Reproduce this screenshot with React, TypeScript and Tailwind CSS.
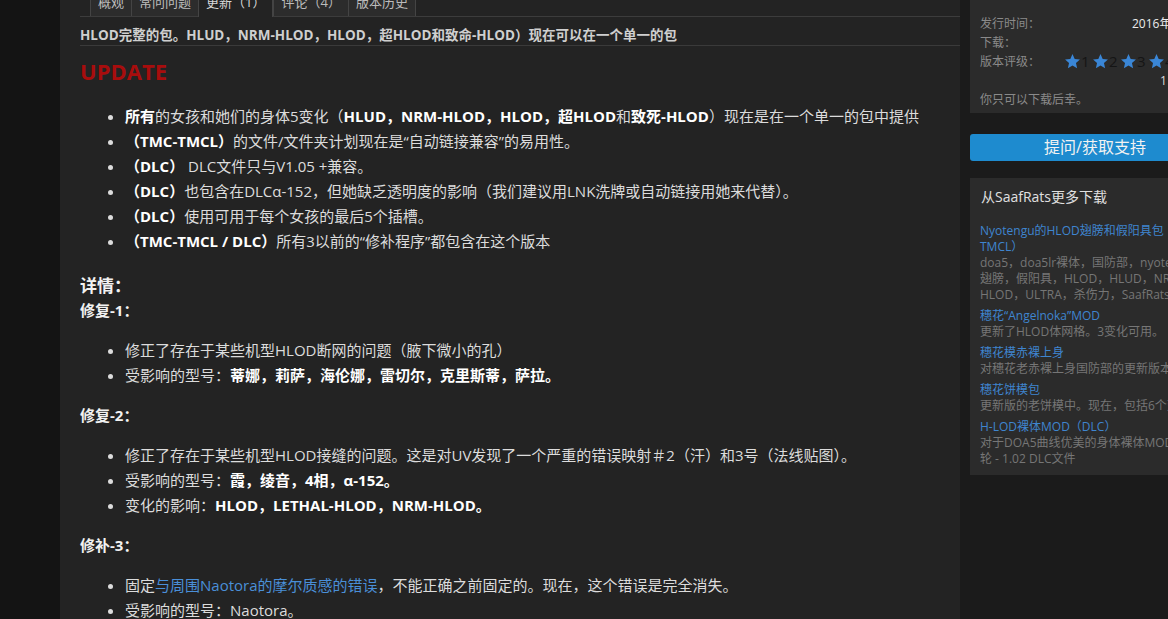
import type { ReactNode } from "react";

const tabs = [
  { label: "概观", active: false },
  { label: "常问问题", active: false },
  { label: "更新（1）", active: true },
  { label: "评论（4）", active: false },
  { label: "版本历史", active: false },
];

const moreDownloads = [
  {
    title: ["Nyotengu的HLOD翅膀和假阳具包（HLUD /", "TMCL）"],
    desc: ["doa5，doa5lr裸体，国防部，nyotengu，", "翅膀，假阳具，HLOD，HLUD，NRM-", "HLOD，ULTRA，杀伤力，SaafRats"],
  },
  { title: ["穗花“Angelnoka”MOD"], desc: ["更新了HLOD体网格。3变化可用。"] },
  { title: ["穗花模赤裸上身"], desc: ["对穗花老赤裸上身国防部的更新版本"] },
  { title: ["穗花饼模包"], desc: ["更新版的老饼模中。现在，包括6个变化"] },
  { title: ["H-LOD裸体MOD（DLC）"], desc: ["对于DOA5曲线优美的身体裸体MOD第", "轮 - 1.02 DLC文件"] },
];

export default function App() {
  return (
    <div className="flex h-[619px] w-[1168px] overflow-hidden bg-[#141414] font-['Open_Sans','Noto_Sans_CJK_SC',sans-serif] text-[#dcdcdc]">
      <div className="w-[60px] shrink-0" />
      <main className="w-[900px] shrink-0 bg-[#232323] pl-[20px]">
        <div className="-mt-[12px] flex border-b border-[#3c3c3c] pl-[10px]">
          {tabs.map((tab) => (
            <div
              key={tab.label}
              className={
                tab.active
                  ? "-mb-px h-[29px] border-x border-[#444] bg-[#232323] px-[7px] text-[13px] leading-[28px] text-[#d8d8d8]"
                  : "h-[28px] border-l border-[#444] bg-[#2c2c2c] px-[7px] text-[13px] leading-[28px] text-[#bcbcbc] last:border-r"
              }
            >
              {tab.label}
            </div>
          ))}
        </div>
        <div className="mt-[8px] border-b border-[#3a3a3a] text-[13.5px] font-bold leading-[20px] text-[#cfcfcf]">
          HLOD完整的包。HLUD，NRM-HLOD，HLOD，超HLOD和致命-HLOD）现在可以在一个单一的包
        </div>
        <div className="mt-[10px] h-[30px] text-[22px] font-bold leading-[30px] text-[#a80d0d]">UPDATE</div>

        <ul className="mt-[17.5px] list-disc pl-[45px] text-[15px] leading-[25px]">
          <li>
            <B>所有</B>的女孩和她们的身体5变化（<B>HLUD，NRM-HLOD，HLOD，超HLOD</B>和<B>致死-HLOD</B>）现在是在一个单一的包中提供
          </li>
          <li>
            <B>（TMC-TMCL）</B>的文件/文件夹计划现在是“自动链接兼容”的易用性。
          </li>
          <li>
            <B>（DLC）</B> DLC文件只与V1.05 +兼容。
          </li>
          <li>
            <B>（DLC）</B>也包含在DLCα-152，但她缺乏透明度的影响（我们建议用LNK洗牌或自动链接用她来代替）。
          </li>
          <li>
            <B>（DLC）</B>使用可用于每个女孩的最后5个插槽。
          </li>
          <li>
            <B>（TMC-TMCL / DLC）</B>所有3以前的“修补程序”都包含在这个版本
          </li>
        </ul>

        <div className="mt-[19px] text-[17px] font-bold leading-[25px] text-[#f2f2f2]">详情：</div>
        <div className="text-[15px] font-bold leading-[25px] text-[#f2f2f2]">修复-1：</div>
        <ul className="my-[15px] list-disc pl-[45px] text-[15px] leading-[25px]">
          <li>修正了存在于某些机型HLOD断网的问题（腋下微小的孔）</li>
          <li>
            受影响的型号：<B>蒂娜，莉萨，海伦娜，雷切尔，克里斯蒂，萨拉。</B>
          </li>
        </ul>
        <div className="text-[15px] font-bold leading-[25px] text-[#f2f2f2]">修复-2：</div>
        <ul className="my-[15px] list-disc pl-[45px] text-[15px] leading-[25px]">
          <li>修正了存在于某些机型HLOD接缝的问题。这是对UV发现了一个严重的错误映射＃2（汗）和3号（法线贴图）。</li>
          <li>
            受影响的型号：<B>霞，绫音，4相，α-152。</B>
          </li>
          <li>
            变化的影响：<B>HLOD，LETHAL-HLOD，NRM-HLOD。</B>
          </li>
        </ul>
        <div className="text-[15px] font-bold leading-[25px] text-[#f2f2f2]">修补-3：</div>
        <ul className="my-[15px] list-disc pl-[45px] text-[15px] leading-[25px]">
          <li>
            固定<span className="text-[#4a8fd8]">与周围Naotora的摩尔质感的错误</span>，不能正确之前固定的。现在，这个错误是完全消失。
          </li>
          <li>受影响的型号：Naotora。</li>
        </ul>
      </main>
      <div className="w-[10px] shrink-0 bg-[#1b1b1b]" />
      <aside className="w-[250px] shrink-0 bg-[#1b1b1b] text-[12px]">
        <div className="bg-[#2b2b2b] pb-[4px] pl-[10px] pt-[14px] leading-[19px] text-[#8a8a8a]">
          <div className="flex">
            <span className="w-[84px]">发行时间：</span>
            <span className="pl-[68px] whitespace-nowrap text-[#ececec]">2016年1月</span>
          </div>
          <div>下载：</div>
          <div className="flex">
            <span className="w-[84px]">版本评级：</span>
            <div className="flex items-center">
              {[1, 2, 3, 4, 5].map((n) => (
                <div key={n} className="mr-[2px] flex items-center">
                  <Star />
                  <span className="w-[9px] text-[15px] leading-[19px] text-[#151515]">{n}</span>
                </div>
              ))}
            </div>
          </div>
          <div className="pl-[180px] text-[#dcdcdc]">1</div>
          <div>你只可以下载后幸。</div>
        </div>

        <div className="mt-[21px] h-[27px] rounded-[3px] bg-[#1e8bcf] text-center text-[16px] leading-[27px] text-[#f2f2f2]">
          提问/获取支持
        </div>

        <div className="mt-[17px] bg-[#2b2b2b] pb-[8px]">
          <div className="px-[11px] pb-[16px] pt-[9px] text-[14px] leading-[20px] text-[#e0e0e0]">从SaafRats更多下载</div>
          <div className="space-y-[5px] pl-[10px]">
            {moreDownloads.map((item) => (
              <div key={item.title[0]} className="leading-[16px]">
                {item.title.map((line) => (
                  <div key={line} className="whitespace-nowrap text-[#3f85cf]">
                    {line}
                  </div>
                ))}
                {item.desc.map((line) => (
                  <div key={line} className="whitespace-nowrap text-[#767676]">
                    {line}
                  </div>
                ))}
              </div>
            ))}
          </div>
        </div>
      </aside>
    </div>
  );
}

function B({ children }: { children: ReactNode }) {
  return <strong className="font-bold text-white">{children}</strong>;
}

function Star() {
  return (
    <svg width="17" height="17" viewBox="0 0 24 24" className="shrink-0">
      <polygon
        points="12,1.5 15.1,8.3 22.5,9 16.9,14 18.5,21.5 12,17.6 5.5,21.5 7.1,14 1.5,9 8.9,8.3"
        fill="#3a86d6"
      />
    </svg>
  );
}
